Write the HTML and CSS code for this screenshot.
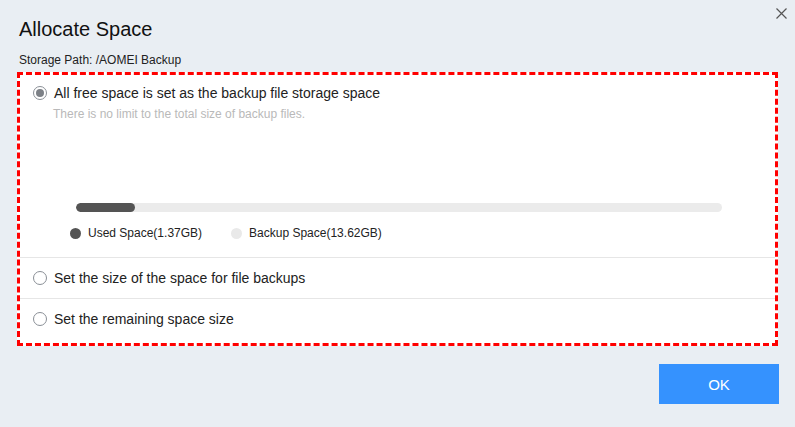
FILE: index.html
```html
<!DOCTYPE html>
<html>
<head>
<meta charset="utf-8">
<link rel="stylesheet" href="styles.css">
</head>
<body>
<div class="dialog">
  <button class="close" aria-label="Close">
    <svg width="11" height="11" viewBox="0 0 11 11"><path d="M0.5 0.5 L10.5 10.5 M10.5 0.5 L0.5 10.5" stroke="#555" stroke-width="1.2" fill="none"/></svg>
  </button>
  <h1 class="title">Allocate Space</h1>
  <div class="path">Storage Path: /AOMEI Backup</div>
  <div class="panel">
    <div class="section first">
      <div class="option">
        <span class="radio checked"></span>
        <span class="label">All free space is set as the backup file storage space</span>
      </div>
      <div class="hint">There is no limit to the total size of backup files.</div>
      <div class="bar"><div class="fill" style="width:59px"></div></div>
      <div class="legend">
        <span class="item"><span class="dot used"></span>Used Space(1.37GB)</span>
        <span class="item"><span class="dot free"></span>Backup Space(13.62GB)</span>
      </div>
    </div>
    <div class="section row">
      <div class="option">
        <span class="radio"></span>
        <span class="label">Set the size of the space for file backups</span>
      </div>
    </div>
    <div class="section row last">
      <div class="option">
        <span class="radio"></span>
        <span class="label">Set the remaining space size</span>
      </div>
    </div>
  </div>
  <div class="actions">
    <button class="ok">OK</button>
  </div>
</div>
</body>
</html>
```

FILE: styles.css
```css
* { box-sizing: border-box; }
html, body {
  margin: 0;
  padding: 0;
  background: #e9eef3;
  font-family: "Liberation Sans", Arial, sans-serif;
  color: #222;
}
.dialog {
  position: relative;
  width: 795px;
  height: 427px;
  padding: 17px 0 0 17px;
}
.close {
  position: absolute;
  top: 8px;
  right: 8px;
  width: 11px;
  height: 11px;
  padding: 0;
  border: 0;
  background: none;
  display: flex;
}
.title {
  margin: 0 0 0 2px;
  font-size: 20px;
  line-height: 24px;
  font-weight: normal;
  color: #111;
}
.path {
  margin: 11px 0 0 2px;
  font-size: 12px;
  line-height: 16px;
  color: #222;
}
.panel {
  margin-top: 4px;
  width: 761px;
  background: #fff;
  border: 3px dashed #ff0000;
}
.section {
  padding-left: 13px;
}
.first {
  padding-top: 8px;
  padding-bottom: 16px;
  border-bottom: 1px solid #e6e6e6;
}
.row {
  height: 41px;
  display: flex;
  align-items: center;
  border-bottom: 1px solid #e6e6e6;
}
.row.last {
  border-bottom: 0;
  height: 44px;
  padding-bottom: 4px;
}
.option {
  display: flex;
  align-items: center;
  gap: 7px;
  font-size: 14px;
  line-height: 20px;
  color: #222;
}
.radio {
  width: 14px;
  height: 14px;
  border-radius: 50%;
  border: 1px solid #8a8f96;
  background: #fff;
  display: flex;
  align-items: center;
  justify-content: center;
  flex: none;
}
.radio.checked::after {
  content: "";
  width: 8px;
  height: 8px;
  border-radius: 50%;
  background: #7c8086;
}
.hint {
  margin: 3px 0 0 20px;
  font-size: 12px;
  line-height: 16px;
  color: #b9b9b9;
}
.bar {
  margin: 81px 0 0 43px;
  width: 646px;
  height: 9px;
  border-radius: 5px;
  background: #ebebeb;
  overflow: hidden;
}
.fill {
  height: 100%;
  border-radius: 5px;
  background: #545454;
}
.legend {
  margin: 13px 0 0 37px;
  display: flex;
  gap: 29px;
  font-size: 12px;
  line-height: 16px;
  color: #222;
}
.item {
  display: flex;
  align-items: center;
  gap: 7px;
}
.dot {
  width: 11px;
  height: 11px;
  border-radius: 50%;
}
.dot.used { background: #545454; }
.dot.free { background: #e9e9e9; }
.actions {
  width: 762px;
  margin-top: 18px;
  display: flex;
  justify-content: flex-end;
}
.ok {
  width: 120px;
  height: 40px;
  border: 0;
  background: #3592fe;
  color: #fff;
  font-family: "Liberation Sans", Arial, sans-serif;
  font-size: 15px;
}
```
